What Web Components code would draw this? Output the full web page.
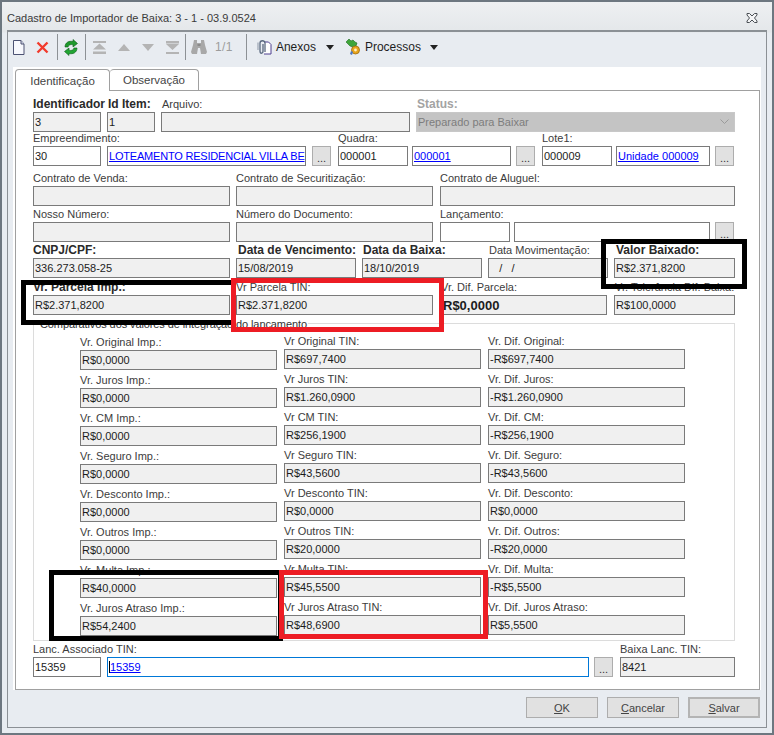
<!DOCTYPE html>
<html>
<head>
<meta charset="utf-8">
<title>Cadastro de Importador de Baixa</title>
<style>
  html, body { margin: 0; padding: 0; }
  body { font: 11px "Liberation Sans", Arial, sans-serif; color: #222; }
</style>
</head>
<body>

<erp-window caption="Cadastro de Importador de Baixa: 3 - 1 - 03.9.0524">
  <erp-toolbar></erp-toolbar>
  <erp-tabs></erp-tabs>

  <erp-row top="6">
    <erp-field w="68" bold label="Identificador" value="3"></erp-field>
    <erp-field w="48" gap="6" bold lx="1" label="Id Item:" value="1"></erp-field>
    <erp-field w="249" gap="6" lx="1" label="Arquivo:"></erp-field>
    <erp-field w="319" gap="6" kind="combo" lx="1" label="Status:" value="Preparado para Baixar"></erp-field>
  </erp-row>
  <erp-row top="-1">
    <erp-field w="68" kind="edit" label="Empreendimento:" value="30"></erp-field>
    <erp-field w="199" gap="6" kind="link" tight value="LOTEAMENTO RESIDENCIAL VILLA BE"></erp-field>
    <erp-dots gap="6"></erp-dots>
    <erp-field w="70" gap="7" kind="edit" label="Quadra:" value="000001"></erp-field>
    <erp-field w="99" gap="4" kind="link" value="000001"></erp-field>
    <erp-dots gap="5"></erp-dots>
    <erp-field w="70" gap="7" kind="edit" label="Lote1:" value="000009"></erp-field>
    <erp-field w="94" gap="4" kind="link" value="Unidade 000009"></erp-field>
    <erp-dots gap="5"></erp-dots>
  </erp-row>
  <erp-row top="5">
    <erp-field w="197" label="Contrato de Venda:"></erp-field>
    <erp-field w="197" gap="6" label="Contrato de Securitização:"></erp-field>
    <erp-field w="295" gap="7" label="Contrato de Aluguel:"></erp-field>
  </erp-row>
  <erp-row top="1">
    <erp-field w="197" label="Nosso Número:"></erp-field>
    <erp-field w="197" gap="6" label="Número do Documento:"></erp-field>
    <erp-field w="70" gap="7" kind="edit" label="Lançamento:"></erp-field>
    <erp-field w="196" gap="4" kind="edit"></erp-field>
    <erp-dots gap="5"></erp-dots>
  </erp-row>
  <erp-row top="1">
    <erp-field w="197" bold label="CNPJ/CPF:" value="336.273.058-25"></erp-field>
    <erp-field w="120" gap="6" bold lx="2" label="Data de Vencimento:" value="15/08/2019"></erp-field>
    <erp-field w="120" gap="6" bold lx="1" shift label="Data da Baixa:" value="18/10/2019"></erp-field>
    <erp-field w="120" gap="6" lx="1" label="Data Movimentação:" value="&nbsp;&nbsp;&nbsp;/&nbsp;&nbsp;&nbsp;/"></erp-field>
    <erp-field w="121" gap="6" bold lx="2" label="Valor Baixado:" value="R$2.371,8200"></erp-field>
  </erp-row>
  <erp-row top="2">
    <erp-field w="197" bold label="Vr. Parcela Imp.:" value="R$2.371,8200"></erp-field>
    <erp-field w="197" gap="6" label="Vr Parcela TIN:" value="R$2.371,8200"></erp-field>
    <erp-field w="166" gap="8" strong label="Vr. Dif. Parcela:" value="R$0,0000"></erp-field>
    <erp-field w="121" gap="7" lx="1" label="Vr. Tolerância Dif. Baixa:" value="R$100,0000"></erp-field>
  </erp-row>

  <erp-group caption="Comparativos dos valores de integração do lançamento">
    <erp-field label="Vr. Original Imp.:" value="R$0,0000"></erp-field>
    <erp-field shift label="Vr Original TIN:" value="R$697,7400"></erp-field>
    <erp-field shift label="Vr. Dif. Original:" value="-R$697,7400"></erp-field>

    <erp-field label="Vr. Juros Imp.:" value="R$0,0000"></erp-field>
    <erp-field shift label="Vr Juros TIN:" value="R$1.260,0900"></erp-field>
    <erp-field shift label="Vr. Dif. Juros:" value="-R$1.260,0900"></erp-field>

    <erp-field label="Vr. CM Imp.:" value="R$0,0000"></erp-field>
    <erp-field shift label="Vr CM TIN:" value="R$256,1900"></erp-field>
    <erp-field shift label="Vr. Dif. CM:" value="-R$256,1900"></erp-field>

    <erp-field label="Vr. Seguro Imp.:" value="R$0,0000"></erp-field>
    <erp-field shift label="Vr Seguro TIN:" value="R$43,5600"></erp-field>
    <erp-field shift label="Vr. Dif. Seguro:" value="-R$43,5600"></erp-field>

    <erp-field label="Vr. Desconto Imp.:" value="R$0,0000"></erp-field>
    <erp-field shift label="Vr Desconto TIN:" value="R$0,0000"></erp-field>
    <erp-field shift label="Vr. Dif. Desconto:" value="R$0,0000"></erp-field>

    <erp-field label="Vr. Outros Imp.:" value="R$0,0000"></erp-field>
    <erp-field shift label="Vr Outros TIN:" value="R$20,0000"></erp-field>
    <erp-field shift label="Vr. Dif. Outros:" value="-R$20,0000"></erp-field>

    <erp-field label="Vr. Multa Imp.:" value="R$40,0000"></erp-field>
    <erp-field shift label="Vr Multa TIN:" value="R$45,5500"></erp-field>
    <erp-field shift label="Vr. Dif. Multa:" value="-R$5,5500"></erp-field>

    <erp-field label="Vr. Juros Atraso Imp.:" value="R$54,2400"></erp-field>
    <erp-field shift label="Vr Juros Atraso TIN:" value="R$48,6900"></erp-field>
    <erp-field shift label="Vr. Dif. Juros Atraso:" value="R$5,5500"></erp-field>
  </erp-group>

  <erp-row top="1">
    <erp-field w="68" kind="edit" label="Lanc. Associado TIN:" value="15359"></erp-field>
    <erp-field w="482" gap="6" kind="focus" value="15359"></erp-field>
    <erp-dots gap="5"></erp-dots>
    <erp-field w="115" gap="7" shift label="Baixa Lanc. TIN:" value="8421"></erp-field>
  </erp-row>

  <erp-button slot="footer" hot="O" rest="K"></erp-button>
  <erp-button slot="footer" hot="C" rest="ancelar"></erp-button>
  <erp-button slot="footer" hot="S" rest="alvar" default></erp-button>

  <!-- marcações feitas por cima da tela -->
  <erp-mark slot="marks" color="#000" x="21" y="280" w="210" h="45" open></erp-mark>
  <erp-mark slot="marks" color="#000" x="601" y="239" w="146" h="50"></erp-mark>
  <erp-mark slot="marks" color="#ed1c24" x="231" y="278" w="213" h="54"></erp-mark>
  <erp-mark slot="marks" color="#000" x="49" y="570" w="234" h="71"></erp-mark>
  <erp-mark slot="marks" color="#ed1c24" x="279" y="570" w="209" h="69"></erp-mark>
</erp-window>

<script>
const windowTpl = document.createElement('template');
windowTpl.innerHTML = `
  <style>
    :host {
      display: block; position: relative; box-sizing: border-box;
      width: 774px; height: 735px; overflow: hidden;
      border: 2px solid #6d7780;
      background: linear-gradient(#eef0f2, #e4e7ea 30px, #e8ecf1 31px);
    }
    .title { height: 28px; display: flex; align-items: center; padding: 3px 0 0 5px; color: #3a3a3a; font-size: 11px; box-sizing: border-box; }
    .title span { flex: 1; }
    .title svg { margin: 0 14px 0 0; }
    .frame { margin: 0 5px; box-sizing: border-box; border: 1px solid #8b9095; border-top-width: 2px; height: 698px; }
    .page { margin: 0 5px; background: #fff; padding: 2px 1px 0 2px; height: 623px; box-sizing: border-box; }
    .sheet { border: 1px solid #a0a0a0; height: 600px; box-sizing: border-box; padding-left: 17px; }
    .foot { display: flex; justify-content: flex-end; gap: 9px; padding: 7px 6px 0 0; }
  </style>
  <div class="title"><span id="cap"></span>
    <svg width="12" height="10" viewBox="0 0 12 10"><path d="M1 .5h2.5L6 3l2.5-2.5H11v1.5L8.5 5 11 8v1.5H8.5L6 7 3.5 9.5H1V8l2.5-3L1 2z" fill="#f4f5f6" stroke="#4a4f55"/></svg>
  </div>
  <div class="frame">
    <slot name="toolbar"></slot>
    <div class="page">
      <slot name="tabs"></slot>
      <div class="sheet"><slot></slot></div>
    </div>
    <div class="foot"><slot name="footer"></slot></div>
  </div>
  <slot name="marks"></slot>
`;
class ErpWindow extends HTMLElement {
  constructor() {
    super();
    this.attachShadow({mode: 'open'});
    this.shadowRoot.appendChild(windowTpl.content.cloneNode(true));
    this.shadowRoot.getElementById('cap').textContent = this.getAttribute('caption');
  }
  connectedCallback() {
    // toolbar and tabs go above the sheet
    this.querySelector('erp-toolbar').slot = 'toolbar';
    this.querySelector('erp-tabs').slot = 'tabs';
  }
}

const toolbarTpl = document.createElement('template');
toolbarTpl.innerHTML = `
  <style>
    :host { display: flex; align-items: center; height: 35px; box-sizing: border-box; padding: 0 0 5px 5px; color: #1e1e1e; font-size: 12px; }
    svg { display: block; flex: none; }
    .sep { width: 1px; height: 26px; background: #8d9195; flex: none; }
    .off { color: #9c9c9c; letter-spacing: .4px; }
    .caret { width: 0; height: 0; border: 4px solid transparent; border-top: 5px solid #222; border-bottom: 0; flex: none; }
  </style>
  <svg width="12" height="15" viewBox="0 0 12 15"><path d="M.5.5h7.5l3 3.500v10.500h-10.500z" fill="#f7f8fd" stroke="#4c5273"/><path d="M8 .5v3.500h3" fill="#d5d9ea" stroke="#4c5273"/></svg>
  <svg width="13" height="13" viewBox="0 0 13 13" style="margin-left:11px"><path d="M1.500 1.500l10 10M11.500 1.500l-10 10" stroke="#f23b2d" stroke-width="2.400" fill="none"/></svg>
  <div class="sep" style="margin-left:8px"></div>
  <svg width="14" height="17" viewBox="0 0 14 17" style="margin-left:6px">
    <path d="M1 8C1 3.500 5 1.500 9 2.500V.5l4.500 4L9 8V5.800C6.500 5 4.500 6 4 8z" fill="#1f9a2c" stroke="#0d5c17" stroke-width=".6"/>
    <path d="M13 9c0 4.500-4 6.500-8 5.500v2L.5 12.500 5 9v2.200C7.500 12 9.500 11 10 9z" fill="#22a633" stroke="#0d5c17" stroke-width=".6"/>
  </svg>
  <div class="sep" style="margin-left:7px"></div>
  <svg width="13" height="13" viewBox="0 0 13 13" style="margin-left:7px"><path d="M0 0h13v2H0zM6.500 2.500L13 8.500H0zM0 10.500h13V13H0z" fill="#b4b4b4"/></svg>
  <svg width="12" height="7" viewBox="0 0 12 7" style="margin-left:12px"><path d="M6 0l6 7H0z" fill="#b4b4b4"/></svg>
  <svg width="12" height="7" viewBox="0 0 12 7" style="margin-left:12px"><path d="M0 0h12L6 7z" fill="#b4b4b4"/></svg>
  <svg width="13" height="13" viewBox="0 0 13 13" style="margin-left:12px"><path d="M0 0h13v2.500H0zM0 3h13L6.500 9zM0 11h13v2H0z" fill="#b4b4b4"/></svg>
  <div class="sep" style="margin-left:6px"></div>
  <svg width="16" height="14" viewBox="0 0 16 14" style="margin-left:5px"><path d="M3 0h3v3h4V0h3l1 5 2 7-1 2H10L9 8H7L6 14H1L0 12l2-7z" fill="#a8a8a8"/><path d="M6.500 4h3v2h-3z" fill="#8a8a8a"/></svg>
  <span class="off" style="margin-left:8px">1/1</span>
  <div class="sep" style="margin-left:13px"></div>
  <svg width="16" height="16" viewBox="0 0 16 16" style="margin-left:9px">
    <path d="M8 3h4.500L15 5.500V15H8" fill="#fff" stroke="#4d3f8f"/>
    <path d="M9 13V4C9 1 4 1 4 4v8c0 3 3 3 3 0V5" fill="none" stroke="#5b6a80" stroke-width="1.300"/>
    <path d="M2 3.500V11" stroke="#8b95a5" stroke-width="1" fill="none"/>
  </svg>
  <span style="margin-left:4px">Anexos</span>
  <div class="caret" style="margin-left:10px"></div>
  <svg width="17" height="17" viewBox="0 0 17 17" style="margin-left:11px">
    <path d="M1 3l3-3 2 2 2-1 2 2 2 1-1 3-3 1-3-1-2-2z" fill="#3ea53a" stroke="#1f6a1e" stroke-width=".6"/>
    <circle cx="10.500" cy="11" r="4" fill="#e9a51c" stroke="#9a6a10" stroke-width=".8"/>
    <circle cx="10.500" cy="11" r="1.400" fill="#fff2c4"/>
    <path d="M5 15l2 1 1-3-2-1z" fill="#4d78c4"/>
  </svg>
  <span style="margin-left:3px">Processos</span>
  <div class="caret" style="margin-left:9px"></div>
`;
class ErpToolbar extends HTMLElement {
  constructor() {
    super();
    this.attachShadow({mode: 'open'});
    this.shadowRoot.appendChild(toolbarTpl.content.cloneNode(true));
  }
}

const tabsTpl = document.createElement('template');
tabsTpl.innerHTML = `
  <style>
    :host { display: flex; height: 21px; position: relative; z-index: 1; }
    .t { box-sizing: border-box; height: 22px; border: 1px solid #a0a0a0; border-bottom: 0; border-radius: 4px 4px 0 0; display: flex; align-items: center; justify-content: center; color: #444; font-size: 11.500px; background: #fff; }
    .a { width: 95px; height: 22px; }
    .b { width: 89px; border-left: 0; height: 21px; }
  </style>
  <div class="t a">Identificação</div>
  <div class="t b">Observação</div>
`;
class ErpTabs extends HTMLElement {
  constructor() {
    super();
    this.attachShadow({mode: 'open'});
    this.shadowRoot.appendChild(tabsTpl.content.cloneNode(true));
  }
}

const rowTpl = document.createElement('template');
rowTpl.innerHTML = `
  <style>:host { display: flex; align-items: flex-end; height: 35px; }</style>
  <slot></slot>
`;
class ErpRow extends HTMLElement {
  constructor() {
    super();
    this.attachShadow({mode: 'open'});
    this.shadowRoot.appendChild(rowTpl.content.cloneNode(true));
  }
  connectedCallback() {
    this.style.marginTop = (this.getAttribute('top') || 0) + 'px';
  }
}

const fieldTpl = document.createElement('template');
fieldTpl.innerHTML = `
  <style>
    :host { display: block; box-sizing: border-box; flex: none; min-width: 0; }
    :host([shift]) { margin-top: -1px; }
    .lbl { height: 15px; line-height: 15px; white-space: nowrap; color: #3c3c3c; font-size: 11px; }
    :host([bold]) .lbl { font-weight: bold; color: #2a2a2a; font-size: 12px; }
    .box { box-sizing: border-box; height: 20px; border: 1px solid #7a7a7a; background: #f0f0f0; display: flex; align-items: center; padding: 0 1px; white-space: nowrap; overflow: hidden; color: #1c1c1c; position: relative; font-size: 11px; }
    :host([kind=edit]) .box, :host([kind=link]) .box, :host([kind=focus]) .box { background: #fff; }
    :host([kind=link]) .val, :host([kind=focus]) .val { color: #0000ff; text-decoration: underline; }
    :host([tight]) .val { letter-spacing: -.2px; }
    :host([kind=focus]) .box { border-color: #0078d7; }
    :host([kind=focus]) .val { border-left: 1px solid #000; }
    :host([kind=combo]) .lbl { color: #a3a3a3; font-weight: bold; font-size: 12px; }
    :host([kind=combo]) .box { background: #c4c4c4; border-color: #c8c8c8; color: #7d7d7d; }
    :host([kind=combo]) svg { position: absolute; right: 5px; top: 6px; }
    :host([strong]) .val { font-weight: bold; font-size: 13px; }
    svg { display: none; }
    :host([kind=combo]) svg { display: block; }
  </style>
  <div class="lbl"></div>
  <div class="box"><span class="val"></span>
    <svg width="9" height="6" viewBox="0 0 9 6"><path d="M.5.500l4 4 4-4" fill="none" stroke="#9a9a9a"/></svg>
  </div>
`;
class ErpField extends HTMLElement {
  constructor() {
    super();
    this.attachShadow({mode: 'open'});
    this.shadowRoot.appendChild(fieldTpl.content.cloneNode(true));
  }
  connectedCallback() {
    const w = this.getAttribute('w');
    if (w) this.style.width = w + 'px';
    const gap = this.getAttribute('gap');
    if (gap) this.style.marginLeft = gap + 'px';
    const lbl = this.shadowRoot.querySelector('.lbl');
    lbl.textContent = this.getAttribute('label') || '';
    lbl.style.paddingLeft = (this.getAttribute('lx') || 0) + 'px';
    this.shadowRoot.querySelector('.val').textContent = this.getAttribute('value') || '';
  }
}

const dotsTpl = document.createElement('template');
dotsTpl.innerHTML = `
  <style>
    :host { display: flex; box-sizing: border-box; flex: none; width: 19px; height: 20px; border: 1px solid #adadad; background: #e1e1e1; color: #333; justify-content: center; align-items: flex-end; line-height: 13px; font-size: 11px; }
  </style>
  ...
`;
class ErpDots extends HTMLElement {
  constructor() {
    super();
    this.attachShadow({mode: 'open'});
    this.shadowRoot.appendChild(dotsTpl.content.cloneNode(true));
  }
  connectedCallback() {
    this.style.marginLeft = (this.getAttribute('gap') || 0) + 'px';
  }
}

const groupTpl = document.createElement('template');
groupTpl.innerHTML = `
  <style>
    :host { display: block; box-sizing: border-box; width: 702px; height: 318px; margin-top: 8px; border: 1px solid #dcdcdc; }
    .cap { width: fit-content; margin: -7px 0 0 5px; padding: 0 1px; height: 15px; line-height: 15px; background: #fff; color: #333; font-size: 11px; letter-spacing: -.1px; }
    .grid { display: grid; grid-template-columns: repeat(3, 197px); column-gap: 7px; row-gap: 3px; padding: 3px 0 0 46px; }
  </style>
  <div class="cap"></div>
  <div class="grid"><slot></slot></div>
`;
class ErpGroup extends HTMLElement {
  constructor() {
    super();
    this.attachShadow({mode: 'open'});
    this.shadowRoot.appendChild(groupTpl.content.cloneNode(true));
    this.shadowRoot.querySelector('.cap').textContent = this.getAttribute('caption');
  }
}

const buttonTpl = document.createElement('template');
buttonTpl.innerHTML = `
  <style>
    :host { display: flex; box-sizing: border-box; width: 72px; height: 21px; border: 1px solid #adadad; background: #e1e1e1; color: #444; justify-content: center; align-items: center; font-size: 11px; }
    :host([default]) { border: 2px solid #b4b4b4; }
    u { text-decoration: underline; }
  </style>
  <span><u></u><span class="r"></span></span>
`;
class ErpButton extends HTMLElement {
  constructor() {
    super();
    this.attachShadow({mode: 'open'});
    this.shadowRoot.appendChild(buttonTpl.content.cloneNode(true));
    this.shadowRoot.querySelector('u').textContent = this.getAttribute('hot');
    this.shadowRoot.querySelector('.r').textContent = this.getAttribute('rest');
  }
}

const markTpl = document.createElement('template');
markTpl.innerHTML = `
  <style>
    :host { display: block; position: absolute; box-sizing: border-box; border: 5px solid #000; pointer-events: none; }
    :host([open]) { border-right: 0; }
  </style>
`;
class ErpMark extends HTMLElement {
  constructor() {
    super();
    this.attachShadow({mode: 'open'});
    this.shadowRoot.appendChild(markTpl.content.cloneNode(true));
  }
  connectedCallback() {
    // window has a 2px border, the coordinates are from the picture
    this.style.left = (this.getAttribute('x') - 2) + 'px';
    this.style.top = (this.getAttribute('y') - 2) + 'px';
    this.style.width = this.getAttribute('w') + 'px';
    this.style.height = this.getAttribute('h') + 'px';
    this.style.borderColor = this.getAttribute('color');
  }
}

customElements.define('erp-window', ErpWindow);
customElements.define('erp-toolbar', ErpToolbar);
customElements.define('erp-tabs', ErpTabs);
customElements.define('erp-row', ErpRow);
customElements.define('erp-field', ErpField);
customElements.define('erp-dots', ErpDots);
customElements.define('erp-group', ErpGroup);
customElements.define('erp-button', ErpButton);
customElements.define('erp-mark', ErpMark);
</script>
</body>
</html>
